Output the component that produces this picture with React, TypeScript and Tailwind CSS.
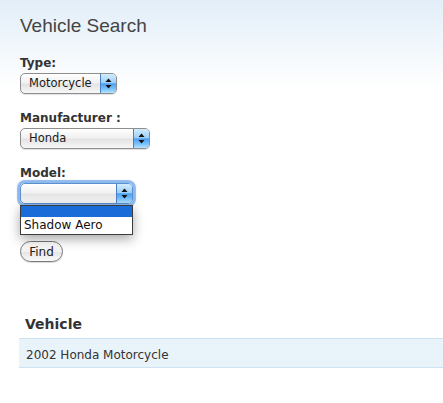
import React from "react";

const uiFont = { fontFamily: '"DejaVu Sans", Verdana, sans-serif' };

function Arrows() {
  return (
    <svg width="7" height="11" viewBox="0 0 7 11">
      <polygon points="3.5,0.5 6.5,4 0.5,4" fill="#111" />
      <polygon points="0.5,7 6.5,7 3.5,10.5" fill="#111" />
    </svg>
  );
}

type SelectProps = {
  width: string;
  value: string;
  focused?: boolean;
  children?: React.ReactNode;
};

function Select({ width, value, focused, children }: SelectProps) {
  return (
    <div className={`relative mt-[3px] ${width}`}>
      <div
        className={`flex h-[21px] overflow-hidden rounded-[5px] border bg-[linear-gradient(to_bottom,#ffffff_0%,#f1f1f1_45%,#e4e4e4_55%,#f7f7f7_100%)] ${
          focused
            ? "border-[#5a8fd0] shadow-[0_0_1px_3px_#8db9ec]"
            : "border-[#8e8e8e] shadow-[0_1px_1px_rgba(0,0,0,0.12)]"
        }`}
      >
        <div className="flex flex-1 items-center pl-[8px] text-[11.5px] text-[#1a1a1a]">{value}</div>
        <div className="flex w-[16px] items-center justify-center border-l border-[#4a7fc8] bg-[linear-gradient(to_bottom,#d2ecfd_0%,#9fd0f7_45%,#4c9ef0_52%,#7cc4fb_80%,#b6e4ff_100%)]">
          <Arrows />
        </div>
      </div>
      {children}
    </div>
  );
}

export default function App() {
  return (
    <div
      className="min-h-[403px] w-[443px] overflow-hidden bg-[linear-gradient(to_bottom,#e2eef8_0px,#ffffff_88px)] text-[#333]"
      style={uiFont}
    >
      <div className="pl-[20px]">
        <h1
          className="pt-[15px] text-[19px] leading-[22px] text-[#444]"
          style={{ fontFamily: '"Liberation Sans", Arial, sans-serif' }}
        >
          Vehicle Search
        </h1>

        <div className="mt-[19px]">
          <label className="block text-[12px] font-bold leading-[14px]">Type:</label>
          <Select width="w-[97px]" value="Motorcycle" />
        </div>

        <div className="mt-[17px]">
          <label className="block text-[12px] font-bold leading-[14px]">Manufacturer :</label>
          <Select width="w-[130px]" value="Honda" />
        </div>

        <div className="mt-[17px]">
          <label className="block text-[12px] font-bold leading-[14px]">Model:</label>
          <Select width="w-[113px]" value="" focused>
            <div className="absolute left-0 top-[22px] z-10 w-[113px] border border-[#3c3c3c] bg-white shadow-[0_4px_12px_rgba(0,0,0,0.35)]">
              <div className="h-[11px] bg-[#1a6cd8]" />
              <div className="px-[3px] pb-[1px] text-[12px] leading-[16px] text-[#111]">Shadow Aero</div>
            </div>
          </Select>
        </div>

        <button
          type="button"
          className="mt-[37px] flex h-[21px] w-[43px] items-center justify-center rounded-full border border-[#7a7a7a] bg-[linear-gradient(to_bottom,#ffffff_0%,#f2f2f2_50%,#e6e6e6_55%,#fafafa_100%)] text-[12px] text-[#222] shadow-[0_1px_1px_rgba(0,0,0,0.15)]"
        >
          Find
        </button>
      </div>

      <div className="ml-[19px] mt-[54px]">
        <div className="pl-[6px] text-[14px] font-bold leading-[16px] text-[#333]">Vehicle</div>
        <div className="mt-[6px] h-[30px] border-y border-[#cde3f2] bg-[#e9f4fa] pl-[7px] pt-[9px] text-[12px] leading-[14px] text-[#333]">
          2002 Honda Motorcycle
        </div>
      </div>
    </div>
  );
}
